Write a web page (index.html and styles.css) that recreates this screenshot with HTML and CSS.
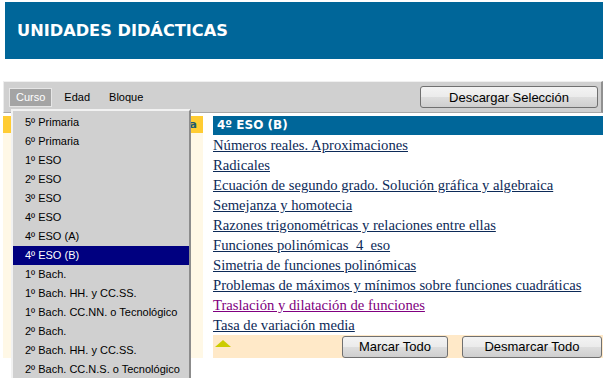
FILE: index.html
```html
<!DOCTYPE html>
<html lang="es">
<head>
  <meta charset="UTF-8" />
  <meta name="viewport" content="width=device-width, initial-scale=1.0"/>
  <title>Unidades Didácticas</title>
  <link rel="stylesheet" href="styles.css">
</head>
<body>
  <header class="banner">
    <h1>UNIDADES DIDÁCTICAS</h1>
  </header>

  <div class="toolbar">
    <nav class="tabs">
      <span class="tab active">Curso</span>
      <span class="tab">Edad</span>
      <span class="tab">Bloque</span>
    </nav>
    <button class="btn btn-download">Descargar Selección</button>

    <ul class="menu">
      <li>5º Primaria</li>
      <li>6º Primaria</li>
      <li>1º ESO</li>
      <li>2º ESO</li>
      <li>3º ESO</li>
      <li>4º ESO</li>
      <li>4º ESO (A)</li>
      <li class="selected">4º ESO (B)</li>
      <li>1º Bach.</li>
      <li>1º Bach. HH. y CC.SS.</li>
      <li>1º Bach. CC.NN. o Tecnológico</li>
      <li>2º Bach.</li>
      <li>2º Bach. HH. y CC.SS.</li>
      <li>2º Bach. CC.N.S. o Tecnológico</li>
    </ul>
  </div>

  <div class="main">
    <aside class="side">
      <div class="side-head">Matemática</div>
    </aside>

    <section class="units">
      <h2>4º ESO (B)</h2>
      <div class="links">
        <a href="#">Números reales. Aproximaciones</a>
        <a href="#">Radicales</a>
        <a href="#">Ecuación de segundo grado. Solución gráfica y algebraica</a>
        <a href="#">Semejanza y homotecia</a>
        <a href="#">Razones trigonométricas y relaciones entre ellas</a>
        <a href="#">Funciones polinómicas&nbsp; 4&nbsp; eso</a>
        <a href="#">Simetria de funciones polinómicas</a>
        <a href="#">Problemas de máximos y mínimos sobre funciones cuadráticas</a>
        <a href="#" class="visited">Traslación y dilatación de funciones</a>
        <a href="#">Tasa de variación media</a>
      </div>
      <div class="actions">
        <span class="up"></span>
        <button class="btn btn-mark">Marcar Todo</button>
        <button class="btn btn-unmark">Desmarcar Todo</button>
      </div>
    </section>
  </div>
</body>
</html>
```

FILE: styles.css
```css
html {
  overflow: hidden;
}
body {
  margin: 0;
  padding-top: 2px;
  height: 376px;
  background: #fff;
  font-family: "Liberation Sans", Arial, sans-serif;
}
.banner {
  margin-left: 5px;
  width: 598px;
  height: 57px;
  background: #006699;
  display: flex;
  align-items: center;
}
.banner h1 {
  margin: 0;
  padding-left: 12px;
  font-family: "DejaVu Sans", Verdana, sans-serif;
  font-size: 16.2px;
  font-weight: bold;
  color: #fff;
}
.toolbar {
  position: relative;
  margin: 22px 0 0 3px;
  width: 597px;
  height: 30px;
  background: #d0d0d0;
  border-top: 1px solid #f0f0f0;
  border-left: 1px solid #ececec;
  border-right: 2px solid #909090;
  border-bottom: 1px solid #a8a8a8;
  display: flex;
  align-items: center;
  justify-content: space-between;
}
.tabs {
  display: flex;
  gap: 5px;
  padding-left: 5px;
}
.tab {
  padding: 1px 6px;
  border: 1px solid transparent;
  font-size: 11px;
  line-height: 15px;
  color: #000;
}
.tab.active {
  background: #a4a4a4;
  border-color: #e6e6e6;
  color: #fff;
}
.btn {
  height: 22px;
  padding: 0;
  border: 1px solid #707070;
  border-radius: 3px;
  background: linear-gradient(#f3f3f3 0%, #ebebeb 50%, #dddddd 51%, #cfcfcf 100%);
  font-family: "Liberation Sans", Arial, sans-serif;
  font-size: 13px;
  color: #000;
}
.btn-download {
  width: 178px;
  margin-right: 3px;
}
.menu {
  position: absolute;
  left: 7px;
  top: 27px;
  z-index: 10;
  width: 176px;
  margin: 0;
  padding: 2px 0 0;
  list-style: none;
  background: #d0d0d0;
  border-top: 2px solid #f2f2f2;
  border-left: 2px solid #f2f2f2;
  border-right: 2px solid #8c8c8c;
}
.menu li {
  height: 19px;
  line-height: 19px;
  padding-left: 12px;
  font-size: 11px;
  color: #000;
}
.menu li.selected {
  background: #000080;
  color: #fff;
}
.main {
  display: flex;
  gap: 10px;
  margin: 3px 0 0 3px;
  width: 600px;
}
.side {
  width: 200px;
  height: 242px;
  background: #fff8e6;
}
.side-head {
  height: 17px;
  line-height: 17px;
  background: #ffcc33;
  text-align: right;
  padding-right: 6px;
  font-family: "DejaVu Sans", Verdana, sans-serif;
  font-size: 11px;
  font-weight: bold;
  color: #1d5a6e;
}
.units {
  width: 390px;
}
.units h2 {
  margin: 0;
  height: 19px;
  line-height: 19px;
  padding-left: 4px;
  background: #006699;
  font-family: "DejaVu Sans", Verdana, sans-serif;
  font-size: 12px;
  font-weight: bold;
  color: #fff;
}
.links a {
  display: block;
  width: max-content;
  line-height: 20px;
  font-family: "Liberation Serif", "Times New Roman", serif;
  font-size: 11pt;
  color: #0c2a58;
}
.links a.visited {
  color: #800080;
}
.actions {
  height: 23px;
  background: #ffe9c8;
  display: flex;
  align-items: center;
}
.up {
  align-self: flex-start;
  margin: 5px 0 0 2px;
  width: 0;
  height: 0;
  border-left: 8px solid transparent;
  border-right: 8px solid transparent;
  border-bottom: 7px solid #cccc00;
}
.btn-mark {
  width: 106px;
  margin-left: auto;
}
.btn-unmark {
  width: 140px;
  margin: 0 1px 0 14px;
}
```
